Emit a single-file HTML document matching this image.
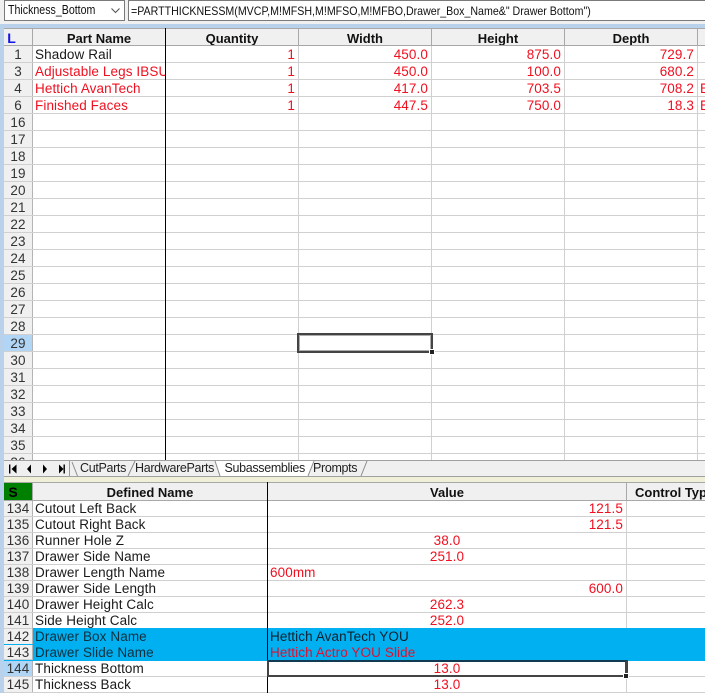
<!DOCTYPE html>
<html><head><meta charset="utf-8">
<style>
html,body{margin:0;padding:0;width:705px;height:693px;overflow:hidden;background:#fff}
body{position:relative;font-family:"Liberation Sans",Arial,sans-serif;font-size:13.5px;color:#1a1a1a}
.a{position:absolute;box-sizing:border-box;white-space:nowrap}
.r{position:absolute;left:4px;width:701px;box-sizing:border-box;display:flex;border-bottom:1px solid #d0d0d0;overflow:hidden}
.r>div{box-sizing:border-box;flex:none;border-right:1px solid #d0d0d0;overflow:hidden;white-space:nowrap;letter-spacing:.1px}
.t .r{height:17px;line-height:17px}
.b .r{height:16px;line-height:15px}
.t .n,.b .n{background:#f0f0f0;border-right:1px solid #b4b4b4;text-align:center;color:#333;letter-spacing:.1px;width:29px}
.t .p{width:133px;border-right:1px solid #000;padding-left:2px}
.t .c{width:133px;text-align:right;padding-right:3px;color:#f01020}
.t .e{width:133px;text-align:left;padding-left:2px;color:#f01020}
.b .d{width:235px;border-right:1px solid #000;padding-left:2px}
.b .v{width:359px;padding-right:3px;color:#f01020;text-align:right}
.b .m{text-align:center;padding:0}
.b .l{text-align:left;padding:0 0 0 2px}
.red{color:#f01020}
.h{font-weight:bold;font-size:13px;text-align:center;color:#111;background:#f0f0f0;line-height:19px;position:absolute;box-sizing:border-box;white-space:nowrap;border-right:1px solid #a8a8a8;overflow:hidden}
.tab{position:absolute;top:460px;line-height:17px;font-size:12.5px;color:#222;letter-spacing:-.33px;white-space:nowrap}
.k{position:absolute;width:1px;background:#000}
</style></head><body>

<div class="a" style="left:0;top:0;width:705px;height:24px;background:#f0f0f0"></div>
<div class="a" style="left:4px;top:0;width:121px;height:21px;background:#fff;border:1px solid #7a7a7a;padding-left:3px;line-height:18px;color:#111"><span style="display:inline-block;font-size:12.5px;transform:scaleX(.85);transform-origin:left center">Thickness_Bottom</span></div>
<svg class="a" style="left:110px;top:6px" width="12" height="9"><path d="M1.5 2.5L5.5 6.5L9.5 2.5" fill="none" stroke="#555" stroke-width="1.1"/></svg>
<div class="a" style="left:128px;top:0;width:577px;height:21px;background:#fff;border:1px solid #7a7a7a;border-right:0;padding-left:2px;line-height:19px;color:#111"><span style="display:inline-block;font-size:12px;transform:scaleX(.886);transform-origin:left center">=PARTTHICKNESSM(MVCP,M!MFSH,M!MFSO,M!MFBO,Drawer_Box_Name&amp;" Drawer Bottom")</span></div>
<div class="a" style="left:0;top:24px;width:705px;height:4px;background:#b9d1ea"></div>
<div class="a" style="left:0;top:24px;width:4px;height:669px;background:#b9d1ea"></div>

<!-- top grid header -->
<div class="a" style="left:4px;top:28px;width:701px;height:18px;background:#f0f0f0;border-top:1px solid #a8a8a8;border-bottom:1px solid #a8a8a8"></div>
<div class="h" style="left:4px;top:29px;width:29px;height:16px;color:#1414e6;font-size:14px;padding-right:13px">L</div>
<div class="h" style="left:33px;top:29px;width:133px;height:16px">Part Name</div>
<div class="h" style="left:166px;top:29px;width:133px;height:16px">Quantity</div>
<div class="h" style="left:299px;top:29px;width:133px;height:16px">Width</div>
<div class="h" style="left:432px;top:29px;width:133px;height:16px">Height</div>
<div class="h" style="left:565px;top:29px;width:133px;height:16px">Depth</div>

<div class="t">
<div class="r" style="top:46px"><div class="n">1</div><div class="p">Shadow Rail</div><div class="c">1</div><div class="c">450.0</div><div class="c">875.0</div><div class="c">729.7</div><div class="e"></div></div>
<div class="r" style="top:63px"><div class="n">3</div><div class="p red">Adjustable Legs IBSU</div><div class="c">1</div><div class="c">450.0</div><div class="c">100.0</div><div class="c">680.2</div><div class="e"></div></div>
<div class="r" style="top:80px"><div class="n">4</div><div class="p red">Hettich AvanTech</div><div class="c">1</div><div class="c">417.0</div><div class="c">703.5</div><div class="c">708.2</div><div class="e">E</div></div>
<div class="r" style="top:97px"><div class="n">6</div><div class="p red">Finished Faces</div><div class="c">1</div><div class="c">447.5</div><div class="c">750.0</div><div class="c">18.3</div><div class="e">E</div></div>
<div class="r" style="top:114px"><div class="n">16</div><div class="p"></div><div class="c"></div><div class="c"></div><div class="c"></div><div class="c"></div></div>
<div class="r" style="top:131px"><div class="n">17</div><div class="p"></div><div class="c"></div><div class="c"></div><div class="c"></div><div class="c"></div></div>
<div class="r" style="top:148px"><div class="n">18</div><div class="p"></div><div class="c"></div><div class="c"></div><div class="c"></div><div class="c"></div></div>
<div class="r" style="top:165px"><div class="n">19</div><div class="p"></div><div class="c"></div><div class="c"></div><div class="c"></div><div class="c"></div></div>
<div class="r" style="top:182px"><div class="n">20</div><div class="p"></div><div class="c"></div><div class="c"></div><div class="c"></div><div class="c"></div></div>
<div class="r" style="top:199px"><div class="n">21</div><div class="p"></div><div class="c"></div><div class="c"></div><div class="c"></div><div class="c"></div></div>
<div class="r" style="top:216px"><div class="n">22</div><div class="p"></div><div class="c"></div><div class="c"></div><div class="c"></div><div class="c"></div></div>
<div class="r" style="top:233px"><div class="n">23</div><div class="p"></div><div class="c"></div><div class="c"></div><div class="c"></div><div class="c"></div></div>
<div class="r" style="top:250px"><div class="n">24</div><div class="p"></div><div class="c"></div><div class="c"></div><div class="c"></div><div class="c"></div></div>
<div class="r" style="top:267px"><div class="n">25</div><div class="p"></div><div class="c"></div><div class="c"></div><div class="c"></div><div class="c"></div></div>
<div class="r" style="top:284px"><div class="n">26</div><div class="p"></div><div class="c"></div><div class="c"></div><div class="c"></div><div class="c"></div></div>
<div class="r" style="top:301px"><div class="n">27</div><div class="p"></div><div class="c"></div><div class="c"></div><div class="c"></div><div class="c"></div></div>
<div class="r" style="top:318px"><div class="n">28</div><div class="p"></div><div class="c"></div><div class="c"></div><div class="c"></div><div class="c"></div></div>
<div class="r" style="top:335px"><div class="n" style="background:#b0d5f5">29</div><div class="p"></div><div class="c"></div><div class="c"></div><div class="c"></div><div class="c"></div></div>
<div class="r" style="top:352px"><div class="n">30</div><div class="p"></div><div class="c"></div><div class="c"></div><div class="c"></div><div class="c"></div></div>
<div class="r" style="top:369px"><div class="n">31</div><div class="p"></div><div class="c"></div><div class="c"></div><div class="c"></div><div class="c"></div></div>
<div class="r" style="top:386px"><div class="n">32</div><div class="p"></div><div class="c"></div><div class="c"></div><div class="c"></div><div class="c"></div></div>
<div class="r" style="top:403px"><div class="n">33</div><div class="p"></div><div class="c"></div><div class="c"></div><div class="c"></div><div class="c"></div></div>
<div class="r" style="top:420px"><div class="n">34</div><div class="p"></div><div class="c"></div><div class="c"></div><div class="c"></div><div class="c"></div></div>
<div class="r" style="top:437px"><div class="n">35</div><div class="p"></div><div class="c"></div><div class="c"></div><div class="c"></div><div class="c"></div></div>
<div class="r" style="top:454px;height:7px;border-bottom:0"><div class="n">36</div><div class="p"></div><div class="c"></div><div class="c"></div><div class="c"></div><div class="c"></div></div>
</div>
<div class="k" style="left:165px;top:28px;height:432px"></div>

<!-- selection 29 -->
<div class="a" style="left:297px;top:333px;width:136px;height:20px;border:2px solid #444;box-shadow:inset 0 0 0 1px rgba(70,70,70,.45)"></div>
<div class="a" style="left:429px;top:349px;width:6px;height:6px;background:#222;border:1px solid #fff"></div>

<!-- tabs -->
<div class="a" style="left:4px;top:460px;width:701px;height:17px;background:#f0f0f0;border-top:1px solid #a0a0a0;border-bottom:1px solid #a0a0a0"></div>
<svg class="a" style="left:4px;top:460px" width="380" height="17">
<rect x="5" y="4.5" width="1.4" height="9" fill="#000"/><path d="M12.5 4.5L7.5 9L12.5 13.5Z" fill="#000"/>
<path d="M27 4.5L23 9L27 13.5Z" fill="#000"/>
<path d="M39 4.5L43 9L39 13.5Z" fill="#000"/>
<path d="M55 4.5L59.5 9L55 13.5Z" fill="#000"/><rect x="59.5" y="4.5" width="1.4" height="9" fill="#000"/>
<path d="M65.5 1V16" stroke="#999" fill="none"/>
<path d="M211 1L216 16L304 16L310 1Z" fill="#fff" stroke="none"/>
<path d="M68 2L73.5 16M124 16L131 1M211 1L216 16M304 16L310 1M357 16L363 1" stroke="#8c8c8c" fill="none"/>
</svg>
<div class="tab" style="left:80px">CutParts</div>
<div class="tab" style="left:135px">HardwareParts</div>
<div class="tab" style="left:224.5px">Subassemblies</div>
<div class="tab" style="left:313px">Prompts</div>

<div class="a" style="left:4px;top:477px;width:701px;height:5px;background:#f0f0d8"></div>

<!-- bottom header -->
<div class="a" style="left:4px;top:482px;width:701px;height:19px;background:#f0f0f0;border-top:1px solid #a8a8a8;border-bottom:1px solid #a8a8a8"></div>
<div class="h" style="left:4px;top:483px;width:29px;height:17px;background:#008000;color:#000;font-size:14px;line-height:19px;padding-right:10px">S</div>
<div class="h" style="left:33px;top:483px;width:235px;height:17px">Defined Name</div>
<div class="h" style="left:268px;top:483px;width:359px;height:17px">Value</div>
<div class="a" style="left:635px;top:483px;line-height:19px;font-size:13px;font-weight:bold;color:#111">Control Typ</div>

<div class="b">
<div class="r" style="top:501px"><div class="n">134</div><div class="d">Cutout Left Back</div><div class="v">121.5</div></div>
<div class="r" style="top:517px"><div class="n">135</div><div class="d">Cutout Right Back</div><div class="v">121.5</div></div>
<div class="r" style="top:533px"><div class="n">136</div><div class="d">Runner Hole Z</div><div class="v m">38.0</div></div>
<div class="r" style="top:549px"><div class="n">137</div><div class="d">Drawer Side Name</div><div class="v m">251.0</div></div>
<div class="r" style="top:565px"><div class="n">138</div><div class="d">Drawer Length Name</div><div class="v l">600mm</div></div>
<div class="r" style="top:581px"><div class="n">139</div><div class="d">Drawer Side Length</div><div class="v">600.0</div></div>
<div class="r" style="top:597px"><div class="n">140</div><div class="d">Drawer Height Calc</div><div class="v m">262.3</div></div>
<div class="r" style="top:628px;height:17px;line-height:17px;background:#00b0f0;border-bottom-color:#00b0f0"><div class="n" style="box-shadow:inset 0 1px 0 #d0d0d0">142</div><div class="d" style="color:#10303f;border-right-color:#00b0f0">Drawer Box Name</div><div class="v l" style="color:#10202c;border-right-color:#00b0f0">Hettich AvanTech YOU</div></div>
<div class="r" style="top:613px;height:16px;border-bottom-color:transparent"><div class="n">141</div><div class="d">Side Height Calc</div><div class="v m">252.0</div></div>
<div class="r" style="top:645px;height:16px;background:#00b0f0;border-bottom-color:#00b0f0"><div class="n" style="border-bottom:1px solid #d0d0d0">143</div><div class="d" style="color:#10303f;border-right-color:#00b0f0">Drawer Slide Name</div><div class="v l" style="color:#e01030;border-right-color:#00b0f0">Hettich Actro YOU Slide</div></div>
<div class="r" style="top:661px"><div class="n" style="background:#b0d5f5">144</div><div class="d">Thickness Bottom</div><div class="v m">13.0</div></div>
<div class="r" style="top:677px"><div class="n">145</div><div class="d">Thickness Back</div><div class="v m">13.0</div></div>
</div>
<div class="k" style="left:267px;top:482px;height:211px"></div>

<!-- selection 144 -->
<div class="a" style="left:267px;top:660px;width:361px;height:17px;border:2px solid #444;border-right-width:3px;border-top-color:#123a50"></div>
<div class="a" style="left:623px;top:673px;width:6px;height:6px;background:#222;border:1px solid #fff"></div>

</body></html>
